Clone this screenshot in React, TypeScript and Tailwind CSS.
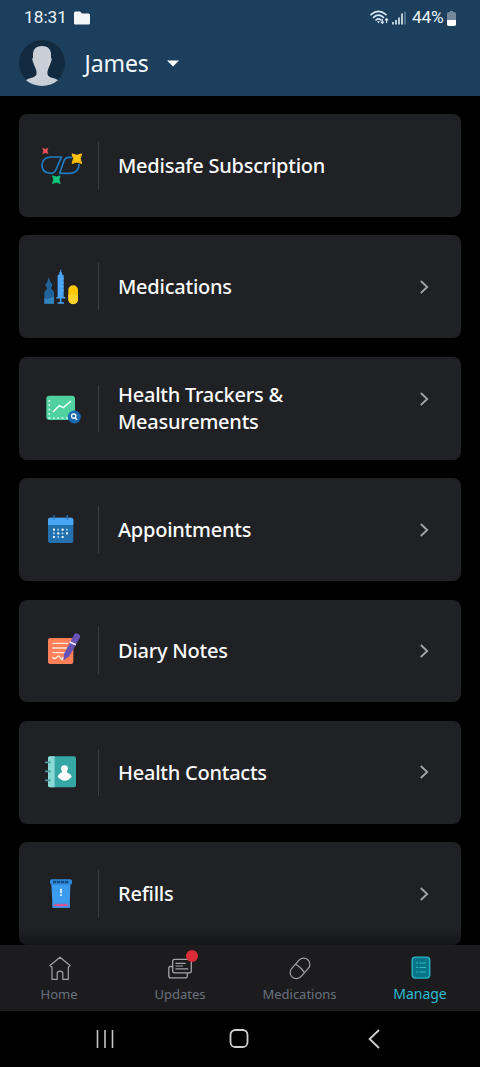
import type { ReactNode } from "react";

const star = (x: number, y: number, r: number) => {
  const q = r * 0.4;
  return `M${x - r} ${y - r}Q${x} ${y - q} ${x + r} ${y - r}Q${x + q} ${y} ${x + r} ${y + r}Q${x} ${y + q} ${x - r} ${y + r}Q${x - q} ${y} ${x - r} ${y - r}Z`;
};

function SubscriptionIcon() {
  return (
    <>
      <path d="M92 82H124L108 120Q103 131 91 131Q66 129 66 106Q67 84 92 82Z" fill="none" stroke="#1f7cc0" strokeWidth="5" strokeLinejoin="round" />
      <path d="M156 83H145Q136 84 132 93L119 131H152Q178 127 177 103" fill="none" stroke="#1f7cc0" strokeWidth="5" strokeLinejoin="round" />
      <path d={star(76, 64, 8)} fill="#e8505a" stroke="#e8505a" strokeWidth="1.5" strokeLinejoin="round" />
      <path d={star(170.5, 87, 14.5)} fill="#fdc20b" stroke="#fdc20b" strokeWidth="3" strokeLinejoin="round" />
      <path d={star(109, 150, 11.5)} fill="#0fc97c" stroke="#0fc97c" strokeWidth="2.5" strokeLinejoin="round" />
    </>
  );
}

function MedicationsIcon() {
  return (
    <>
      <path d="M86 75L91 90L96 95V102L93 109L102 120V155H73V121L82 109L77 103V96L82 90Z" fill="#20639b" />
      <path d="M73 137Q81 147 102 133V155H73Z" fill="#3181bd" />
      <path d="M122 53V68" stroke="#4aa5f6" strokeWidth="3" />
      <path d="M118 61H126V68H131V135H113V68H118Z" fill="#4aa5f6" />
      <path d="M109 137H136M122 137V152M113 153H132" stroke="#4aa5f6" strokeWidth="4.5" />
      <path d="M125 80H131M125 92H131M125 104H131M125 116H131" stroke="#74bcfc" strokeWidth="2" />
      <rect x="145" y="100" width="29" height="56" rx="14" fill="#ffc708" />
      <path d="M145 128H174V142A14 14 0 0 1 145 142Z" fill="#ffd22a" />
    </>
  );
}

function TrackersIcon() {
  return (
    <>
      <rect x="79" y="66" width="86" height="73" rx="9" fill="#4fd2a0" />
      <path d="M88 79V133H148" fill="none" stroke="#e6fff6" strokeWidth="5" strokeDasharray="5 8" />
      <path d="M99 115L118 96L130 102L153 82" fill="none" stroke="#f2fffb" strokeWidth="4.5" />
      <circle cx="163" cy="130" r="19.5" fill="#1769b0" />
      <circle cx="161" cy="127" r="6.5" fill="none" stroke="white" strokeWidth="4" />
      <path d="M165 132L171 138" stroke="white" strokeWidth="4" />
    </>
  );
}

function CalendarIcon() {
  return (
    <>
      <rect x="84" y="68" width="76" height="76" rx="6" fill="#2371ae" />
      <path d="M84 90V74Q84 68 90 68H154Q160 68 160 74V90Z" fill="#49a6f5" />
      <path d="M102 60V74M142 60V74" stroke="#2872b5" strokeWidth="4" />
      <path d="M99 104H145M99 115H145M99 126H132" stroke="#a9d5f4" strokeWidth="5" strokeDasharray="5 8" />
      <path d="M99 104H105M125 104H131M112 115H118M138 115H144M99 126H105M125 126H131" stroke="white" strokeWidth="5" />
    </>
  );
}

function DiaryIcon() {
  return (
    <>
      <rect x="84" y="66" width="76" height="78" rx="7" fill="#ff8058" />
      <path d="M97 82H145M97 96H141M97 110H137" stroke="#ffe5d9" strokeWidth="4" />
      <path d="M97 124Q104 131 110 124Q116 117 119 123L126 131L130 122" fill="none" stroke="#fff0e8" strokeWidth="4" />
      <path d="M163 55Q167 49 174 53Q183 57 179 66L148 121L131 133L132 114Z" fill="#6652b8" />
      <path d="M149 78L168 86" stroke="#f3eaff" strokeWidth="5" />
    </>
  );
}

function ContactsIcon() {
  return (
    <>
      <rect x="84" y="59" width="84" height="93" rx="6" fill="#35a7a5" />
      <path d="M104 59H90Q84 59 84 65V146Q84 152 90 152H104Z" fill="#8ad9d5" />
      <path d="M77 77H91M77 104H91M77 131H91" stroke="#4e9d9c" strokeWidth="5" strokeLinecap="round" />
      <path d="M133 86C121 86 122 99 126 104Q127 108 122 109Q114 112 113 121Q124 132 134 132Q145 132 155 121Q154 112 144 109Q139 108 141 104C146 97 145 86 133 86Z" fill="white" />
    </>
  );
}

function RefillsIcon() {
  return (
    <>
      <path d="M94 73H151L149 143H98Z" fill="#3c9df0" />
      <rect x="90" y="58" width="66" height="16" rx="6" fill="#318ddf" />
      <path d="M99 66H147" stroke="#164c86" strokeWidth="8" strokeDasharray="10 2" />
      <path d="M97 128H149V143H98Z" fill="#4a90e6" />
      <path d="M101 138Q105 129 110 134Q115 128 120 134Q125 128 130 134Q136 127 145 138Z" fill="#e84f8b" />
      <path d="M123 86V100M123 103V108" stroke="white" strokeWidth="4.5" />
    </>
  );
}

type Item = { label: ReactNode; icon: ReactNode; box: string; noArrow?: boolean; raised?: boolean };

const items: Item[] = [
  { label: "Medisafe Subscription", icon: <SubscriptionIcon />, box: "0 1 234 210", noArrow: true },
  { label: "Medications", icon: <MedicationsIcon />, box: "0 0 234 210" },
  { label: <>Health Trackers &amp;<br />Measurements</>, icon: <TrackersIcon />, box: "0 -2 234 210", raised: true },
  { label: "Appointments", icon: <CalendarIcon />, box: "0 0 234 210" },
  { label: "Diary Notes", icon: <DiaryIcon />, box: "0 0 234 210" },
  { label: "Health Contacts", icon: <ContactsIcon />, box: "0 1 234 210" },
  { label: "Refills", icon: <RefillsIcon />, box: "0 -3 234 210" },
];

function Card({ item }: { item: Item }) {
  return (
    <div className="flex h-[102.8px] shrink-0 items-center rounded-[8px] bg-[#202125] pl-px">
      <svg className="h-[70px] w-[78px] shrink-0" viewBox={item.box}>{item.icon}</svg>
      <div className="h-[47px] w-px shrink-0 bg-[#3b3c40]" />
      <div className="ml-[19px] flex-1 text-[20px] leading-[27.3px] font-medium tracking-[-0.24px] text-[#fbfbfc]">{item.label}</div>
      {!item.noArrow && (
        <svg className={item.raised ? "mr-[31px] mb-[18px] h-4 w-3" : "mr-[31px] h-4 w-3"} viewBox="0 0 12 16" fill="none" stroke="#a4a5a8" strokeWidth="1.8">
          <path d="M2.8 2L9.2 8L2.8 14" />
        </svg>
      )}
    </div>
  );
}

function StatusBar() {
  return (
    <div className="flex h-[36px] items-center pl-[24px] pr-[24px] font-['Roboto',sans-serif] text-[17.3px] leading-none text-[#eaf3f8]">
      <span className="w-[43px]">18:31</span>
      <svg className="ml-[7px] h-[14px] w-[16px]" viewBox="0 0 16 14" fill="#f3f5f7">
        <path d="M1.4 .5H6L8 2.5H14.5Q16 2.5 16 4V12.3Q16 13.6 14.5 13.6H1.4Q0 13.6 0 12.3V2Q0 .5 1.4 .5Z" />
      </svg>
      <svg className="ml-auto h-[18px] w-[20px]" viewBox="0 0 20 18" fill="none" stroke="#d9e9f3" strokeWidth="1.6">
        <path d="M1 5.7Q8.5 -.8 16 5.7M3.5 8.4Q8.5 4 13.5 8.4M6 11Q8.5 8.7 11 11" strokeLinecap="round" />
        <path d="M7 12.2L8.5 14.6L10 12.2Z" fill="#d9e9f3" stroke="none" />
        <path d="M12.3 9.8V14M10.8 12.6L12.3 14.3L13.8 12.6M16.6 14V9.8M15.1 11.3L16.6 9.6L18.1 11.3" strokeWidth="1.1" />
      </svg>
      <svg className="ml-[2px] h-[14px] w-[14px]" viewBox="0 0 14 14" strokeWidth="1.6" stroke="#e5f0f6">
        <path d="M1 11V13.5M4 9V13.5M7 6.5V13.5M10 2.5V13.5" />
        <path d="M13 .5V13.5" stroke="#607e98" />
      </svg>
      <span className="ml-[6px] w-[33px] tracking-[-0.2px]">44%</span>
      <svg className="ml-[2px] h-[15px] w-[9px]" viewBox="0 0 9 15">
        <path d="M2 1H3V0H6V1H7Q9 1 9 3V13Q9 15 7 15H2Q0 15 0 13V3Q0 1 2 1Z" fill="#75889b" />
        <path d="M0 9H9V13Q9 15 7 15H2Q0 15 0 13Z" fill="#fff" />
      </svg>
    </div>
  );
}

function Header() {
  return (
    <header className="h-[95.5px] shrink-0 bg-[#1d3f5e]">
      <StatusBar />
      <div className="flex h-[54px] items-center pl-[19px]">
        <svg className="h-[46px] w-[46px]" viewBox="0 0 46 46">
          <circle cx="23" cy="23" r="23" fill="#132b40" />
          <path d="M23 6C16.5 6 13.6 10 14 15.5V18Q12.5 18 14 22L15.5 26Q18 31 17.5 34Q17 37 11 38.2Q8.5 38.8 7 40.3Q14 46 23 46Q32 46 39 40.3Q37.5 38.8 34 38Q29 37 28.5 34Q28 31 30.5 26L32 22Q33.5 18 32 18V15.5C32.4 10 29.5 6 23 6Z" fill="#c9cfd7" />
        </svg>
        <span className="ml-[19.5px] w-[65.5px] text-[23px] leading-none tracking-[-0.1px] whitespace-nowrap text-[#f3f8fb]">James</span>
        <svg className="ml-[17px] h-[7px] w-[12px]" viewBox="0 0 12 7" fill="#fff"><path d="M0 .5H12L6 6.5Z" /></svg>
      </div>
    </header>
  );
}

function BottomNav() {
  return (
    <nav className="grid h-[65.5px] shrink-0 grid-cols-4 bg-[#1c1c1e] text-[13px] leading-[18px] text-[#69727e]">
      <div className="flex flex-col items-center pt-[11px]">
        <svg className="h-[24px] w-[24px]" viewBox="0 0 24 24" fill="none" stroke="#a3a4a7" strokeWidth="1.2">
          <path d="M2 9.5L12 1.2L22 9.5L20.3 11.3V23.3H14.8V17.3Q14.8 15.2 12 15.2Q9.2 15.2 9.2 17.3V23.3H4V11.3Z" strokeLinejoin="round" />
        </svg>
        <span className="mt-[5px] mr-[2px]">Home</span>
      </div>
      <div className="flex flex-col items-center pt-[11px]">
        <div className="relative h-[24px] w-[24px]">
          <svg className="h-[24px] w-[24px]" viewBox="0 0 24 24" fill="none" stroke="#a3a4a7" strokeWidth="1.3">
            <path d="M4.7 10.5H2.5Q.8 10.5 .8 12.3V20Q.8 21.9 2.6 21.9H17.6Q19.3 21.9 19.3 20V17" />
            <rect x="4.7" y="3.3" width="18.6" height="13.5" rx="2" />
            <path d="M7.5 7.3H17.7M7.5 10H15M7.5 12.8H20.2" strokeWidth="1.2" />
          </svg>
          <div className="absolute top-[-6px] left-[18px] h-[12px] w-[12px] rounded-full bg-[#da2d38]" />
        </div>
        <span className="mt-[5px]">Updates</span>
      </div>
      <div className="flex flex-col items-center pt-[11px]">
        <svg className="h-[24px] w-[24px]" viewBox="0 0 24 24" fill="none" stroke="#a3a4a7" strokeWidth="1.2">
          <rect x="5.8" y=".7" width="12.4" height="23.4" rx="6.2" transform="rotate(42 12 12.4)" />
          <path d="M7.5 8.2L10 9.7Q14 12.7 16.3 16.5" />
        </svg>
        <span className="mt-[5px] mr-[1px]">Medications</span>
      </div>
      <div className="flex flex-col items-center pt-[11px] text-[14px] text-[#29bdd4]">
        <svg className="ml-px h-[24px] w-[20px]" viewBox="0 0 20 24">
          <rect x="1.2" y="1.1" width="17.5" height="21" rx="3" fill="#087487" stroke="#26b5ca" strokeWidth="1.4" />
          <path d="M5 7H7M8.5 7H15M5 11.5H7M8.5 11.5H15M5 16H7M8.5 16H15" stroke="#31b6c8" strokeWidth="1.1" />
        </svg>
        <span className="mt-[5px]">Manage</span>
      </div>
    </nav>
  );
}

function SystemNav() {
  return (
    <div className="flex h-[56.5px] shrink-0 items-center bg-black pl-[96px]">
      <svg className="h-[18px] w-[18px]" viewBox="0 0 18 18" stroke="#c5c5c5" strokeWidth="1.6"><path d="M1.5 0V18M9 0V18M16.5 0V18" /></svg>
      <svg className="ml-[115px] h-[19px] w-[20px]" viewBox="0 0 20 19" fill="none" stroke="#d0d0d0" strokeWidth="1.8"><rect x="1.5" y="1" width="17" height="17" rx="4.8" /></svg>
      <svg className="ml-[118px] h-[20px] w-[14px]" viewBox="0 0 14 20" fill="none" stroke="#d0d0d0" strokeWidth="1.8"><path d="M12 1L2.6 10L12 19" /></svg>
    </div>
  );
}

export default function App() {
  return (
    <div className="flex h-[1067px] w-[480px] flex-col overflow-hidden bg-black font-['Noto_Sans',sans-serif]">
      <Header />
      <main className="relative min-h-0 flex-1 overflow-hidden px-[19px] pt-[18.5px]">
        <div className="flex flex-col gap-[18.6px]">
          {items.map((item, i) => <Card key={i} item={item} />)}
        </div>
        <div className="absolute inset-x-0 bottom-0 h-[17px] bg-linear-to-b from-transparent to-black/35" />
      </main>
      <BottomNav />
      <SystemNav />
    </div>
  );
}
